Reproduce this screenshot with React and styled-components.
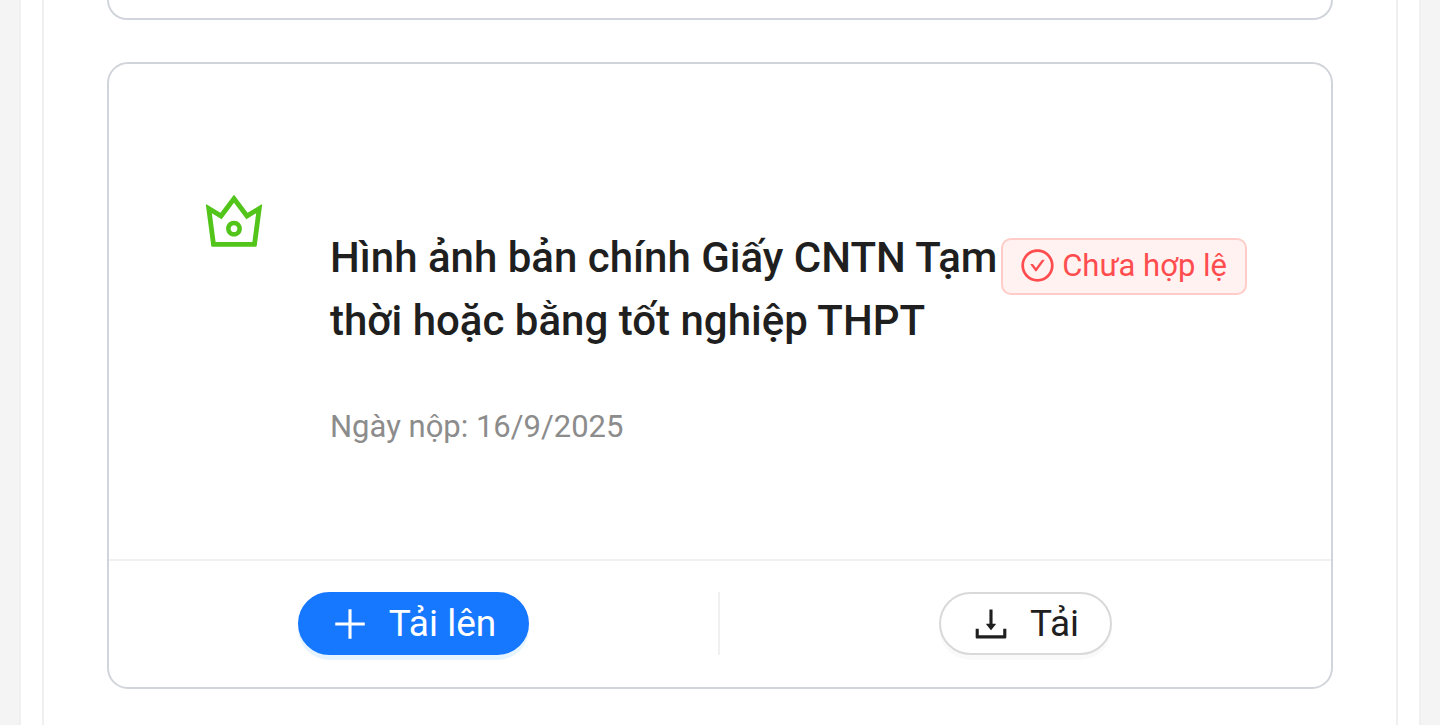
import styled, { createGlobalStyle, css } from 'styled-components'
import {
  AiOutlineCheckCircle,
  AiOutlineCrown,
  AiOutlineDownload,
  AiOutlinePlus,
} from 'react-icons/ai'

const GlobalStyles = createGlobalStyle`
  * {
    box-sizing: border-box;
  }

  body {
    margin: 0;
    background: #f4f4f4;
    color: #1f1f1f;
    font-family: Roboto, "Noto Sans", sans-serif;
  }
`;

const documents = [
  {
    title: 'Hình ảnh bản chính Giấy CNTN Tạm thời hoặc bằng tốt nghiệp THPT',
    status: 'Chưa hợp lệ',
    date: '16/9/2025',
  },
]

function DocumentCard({ title, status, date }) {
  return (
    <Card>
      <CardBody>
        <Avatar>
          <AiOutlineCrown />
        </Avatar>
        <Detail>
          <TitleRow>
            <Title>{title}</Title>
            <Tag>
              <AiOutlineCheckCircle size={37} />
              {status}
            </Tag>
          </TitleRow>
          <Description>Ngày nộp: {date}</Description>
        </Detail>
      </CardBody>
      <CardActions>
        <Action>
          <Button type="button" $primary>
            <AiOutlinePlus size={42} />
            Tải lên
          </Button>
        </Action>
        <Action>
          <Button type="button">
            <AiOutlineDownload size={42} />
            Tải
          </Button>
        </Action>
      </CardActions>
    </Card>
  )
}

function App() {
  return (
    <>
      <GlobalStyles />
      <Page>
        <Panel>
          <List>
            <PreviousCard />
            {documents.map((doc) => (
              <DocumentCard key={doc.title} {...doc} />
            ))}
          </List>
        </Panel>
      </Page>
    </>
  )
}

const Page = styled.div`
  padding: 0 19px;
`;

const Panel = styled.main`
  padding: 0 21px;
  background: #ffffff;
  border: 2px solid #f0f0f0;
  border-width: 0 2px;
`;

const List = styled.section`
  display: flex;
  flex-direction: column;
  gap: 42px;
  min-height: 100vh;
  padding: 0 63px 32px;
  border: 2px solid #f0f0f0;
  border-width: 0 2px;
`;

const Card = styled.article`
  border: 2px solid #d1d5db;
  border-radius: 21px;
  background: #ffffff;
`;

// only the bottom edge of the card above is in view
const PreviousCard = styled.div`
  height: 20px;
  border: 2px solid #d1d5db;
  border-top: 0;
  border-radius: 0 0 21px 21px;
`;

const CardBody = styled.div`
  display: flex;
  gap: 54px;
  padding: 115px 84px 107px 83px;
`;

const Avatar = styled.div`
  display: flex;
  flex: none;
  align-items: center;
  justify-content: center;
  width: 84px;
  height: 84px;
  color: #52c41a;
  font-size: 72px;
`;

const Detail = styled.div`
  flex: 1;
  min-width: 0;
  padding-top: 47px;
`;

const TitleRow = styled.div`
  display: flex;
  align-items: flex-start;
  justify-content: space-between;
`;

const Title = styled.h4`
  flex: 1;
  margin: 0;
  font-size: 42px;
  font-weight: 500;
  line-height: 63px;
`;

const Tag = styled.span`
  display: flex;
  flex: none;
  align-items: center;
  gap: 6px;
  height: 57px;
  margin-top: 12px;
  padding: 0 18px 2px 16px;
  border: 2px solid #ffccc7;
  border-radius: 10px;
  background: #fff2f0;
  color: #ff4d4f;
  font-size: 31px;
`;

const Description = styled.p`
  margin: 50px 0 0;
  color: #8c8c8c;
  font-size: 31px;
  line-height: 50px;
`;

const CardActions = styled.div`
  display: flex;
  padding: 31px 0 32px;
  border-top: 2px solid #f0f0f0;
`;

const Action = styled.div`
  display: flex;
  justify-content: center;
  width: 50%;

  &:not(:last-child) {
    border-right: 2px solid #f0f0f0;
  }
`;

const Button = styled.button`
  display: flex;
  align-items: center;
  gap: 18px;
  height: 63px;
  padding: 0 31px 0 29px;
  border: 2px solid #d9d9d9;
  border-radius: 32px;
  background: #ffffff;
  box-shadow: 0 5px 0 rgba(0, 0, 0, 0.02);
  color: #1f1f1f;
  font-family: inherit;
  font-size: 37px;
  cursor: pointer;

  ${({ $primary }) => $primary && css`
    border-color: #1677ff;
    background: #1677ff;
    box-shadow: 0 5px 0 rgba(5, 145, 255, 0.1);
    color: #ffffff;
  `}
`;

export default App
